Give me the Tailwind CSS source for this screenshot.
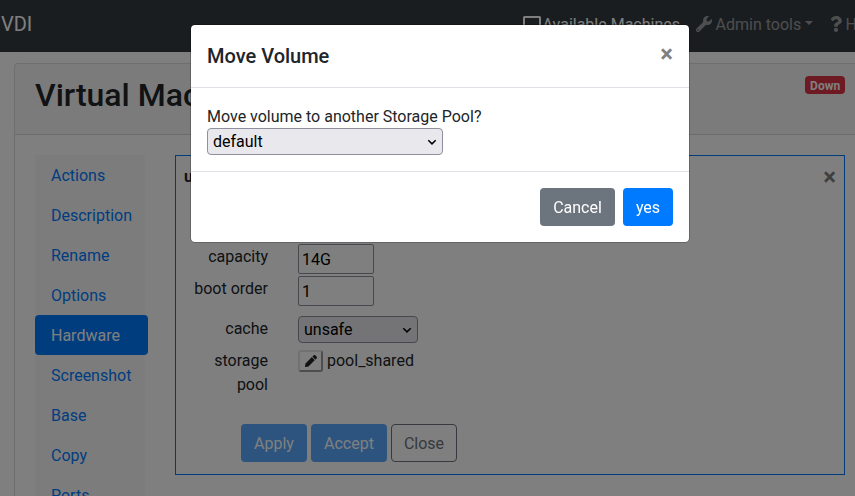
<!DOCTYPE html>
<html lang="en">
<head>
<meta charset="utf-8">
<title>Move Volume</title>
<script src="https://cdn.jsdelivr.net/npm/@tailwindcss/browser@4"></script>
</head>
<body class="h-[496px] overflow-hidden bg-white font-[Roboto,sans-serif] text-base leading-6 text-[#212529]">
<div class="h-[496px] overflow-hidden">
  <nav class="flex h-[52px] items-center justify-between bg-[#343a40] pb-1">
    <span class="pl-px text-xl text-white">VDI</span>
    <div class="flex w-[332px] shrink-0 items-center pt-[2px] whitespace-nowrap text-white/50">
      <a class="flex w-[172.5px] shrink-0 items-center text-white">
        <svg class="mr-[2px] h-[18px] w-[18px]" viewBox="0 0 18 18" fill="none" stroke="currentColor" stroke-width="2"><rect x="1" y="1" width="16" height="12" rx="0.5"/><path d="M5 16h8M9 13v3"/></svg><span class="-ml-[0.5px]">Available Machines</span></a>
      <a class="flex w-[134px] shrink-0 items-center">
        <svg class="mr-1 mb-[2px] h-4 w-4" viewBox="0 0 512 512" fill="currentColor"><path d="M507.73 109.1c-2.24-9.03-13.54-12.09-20.12-5.51l-74.36 74.36-67.88-11.31-11.31-67.88 74.36-74.36c6.62-6.62 3.43-17.9-5.66-20.16-47.38-11.74-99.55.91-136.58 37.93-39.64 39.64-50.55 97.1-34.05 147.2L18.74 402.76c-24.99 24.99-24.99 65.51 0 90.5 24.99 24.99 65.51 24.99 90.5 0l213.21-213.21c50.12 16.71 107.47 5.68 147.37-34.22 37.07-37.07 49.7-89.32 37.91-136.73zM64 472c-13.25 0-24-10.75-24-24 0-13.26 10.75-24 24-24s24 10.74 24 24c0 13.25-10.75 24-24 24z"/></svg>Admin tools<span class="mb-1 ml-1 border-x-[4.8px] border-t-[4.8px] border-x-transparent border-t-current"></span></a>
      <a class="flex shrink-0 items-center">
        <svg class="mr-1 mb-[2px] h-4 w-3" viewBox="0 0 384 512" fill="currentColor"><path d="M202.021 0C122.202 0 70.503 32.703 29.914 91.026c-7.363 10.58-5.093 25.086 5.178 32.874l43.138 32.709c10.373 7.865 25.132 6.026 33.253-4.148 25.049-31.381 43.63-49.449 82.757-49.449 30.764 0 68.816 19.799 68.816 49.631 0 22.552-18.617 34.134-48.993 51.164-35.423 19.86-82.299 44.576-82.299 106.405V320c0 13.255 10.745 24 24 24h72.471c13.255 0 24-10.745 24-24v-5.773c0-42.86 125.268-44.645 125.268-160.627C377.504 66.256 286.902 0 202.021 0zM192 373.459c-38.196 0-69.271 31.075-69.271 69.271 0 38.195 31.075 69.27 69.271 69.27s69.271-31.075 69.271-69.271-31.075-69.27-69.271-69.27z"/></svg>H</a>
    </div>
  </nav>
  <main class="mt-[11px] ml-[14px] h-[500px] rounded-tl border-t border-l border-black/[.125]">
    <header class="flex h-[71px] items-start justify-between border-b border-black/[.125] bg-black/[.03] pt-3 pr-[10px] pl-5">
      <h2 class="text-[32px] leading-[38px] font-medium">Virtual Machine</h2>
      <span class="h-[18px] rounded bg-[#dc3545] px-[4.8px] text-xs leading-[20px] font-bold text-white">Down</span>
    </header>
    <div class="flex gap-[27px] pt-5 pr-[10px] pl-5">
      <div class="w-[113px] shrink-0">
        <nav class="h-[400px] w-[110px] bg-[#f8f9fa] text-[#007bff]">
          <a class="block px-4 pt-[9px] pb-[7px]">Actions</a>
          <a class="block px-4 pt-[9px] pb-[7px]">Description</a>
          <a class="block px-4 pt-[9px] pb-[7px]">Rename</a>
          <a class="block px-4 pt-[9px] pb-[7px]">Options</a>
          <a class="block w-[113px] rounded bg-[#007bff] px-4 pt-[9px] pb-[7px] text-white">Hardware</a>
          <a class="block px-4 pt-[9px] pb-[7px]">Screenshot</a>
          <a class="block px-4 pt-[9px] pb-[7px]">Base</a>
          <a class="block px-4 pt-[9px] pb-[7px]">Copy</a>
          <a class="block px-4 pt-[9px] pb-[7px]">Ports</a>
        </nav>
      </div>
      <section class="h-[320px] w-[670px] shrink-0 border border-[#007bff]">
        <div class="flex h-[86px] justify-between pt-2 pr-2 pl-2"><b class="pt-px">usb</b><span class="mt-px text-2xl leading-6 font-bold text-black/50">×</span></div>
        <div class="grid grid-cols-[92px_1fr] gap-x-[30px]">
          <label class="h-8 pt-[3px] text-right">capacity</label>
          <input class="mt-[2px] h-[30px] w-[76px] rounded-[2px] border border-[#8f8f9d] bg-white px-[3px] text-black" value="14G">
          <label class="h-10 pt-[3px] text-right">boot order</label>
          <input class="mt-[2px] h-[30px] w-[76px] rounded-[2px] border border-[#8f8f9d] bg-white px-[3px] text-black" value="1">
          <label class="h-8 pt-[3px] text-right">cache</label>
          <div class="mt-[2px] flex h-[27px] w-[120px] items-center justify-between rounded border border-[#8f8f9d] bg-[#e9e9ed] pr-[5px] pl-[5px] text-black">unsafe<svg class="h-[10px] w-[10px]" viewBox="0 0 10 10" fill="none" stroke="currentColor" stroke-width="1.5"><path d="M1.3 3.2L5 6.9l3.7-3.7"/></svg></div>
          <label class="pt-[3px] pl-5 text-right">storage pool</label>
          <div class="flex h-8 items-start"><button class="mt-1 flex h-[22px] w-[25px] items-center justify-center rounded-[3px] border-2 border-[#e3e3e3] border-r-[#9a9a9a] border-b-[#9a9a9a] bg-white text-[#212529]"><svg class="h-3 w-3" viewBox="0 0 512 512" fill="currentColor"><path d="M497.9 142.1l-46.1 46.1c-4.7 4.7-12.3 4.7-17 0l-111-111c-4.7-4.7-4.7-12.3 0-17l46.1-46.1c18.7-18.7 49.1-18.7 67.9 0l60.1 60.1c18.8 18.7 18.8 49.1 0 67.9zM284.2 99.8L21.6 362.4.4 483.9c-2.9 16.4 11.4 30.6 27.8 27.8l121.5-21.3 262.6-262.6c4.7-4.7 4.7-12.3 0-17l-111-111c-4.8-4.7-12.4-4.7-17.1 0z"/></svg></button><span class="ml-1 pt-[3px]">pool_shared</span></div>
        </div>
        <div class="flex gap-1 pt-[27px] pl-[65px]">
          <button class="h-[38px] w-[66px] rounded bg-[#007bff] pt-[2px] text-white opacity-65">Apply</button>
          <button class="h-[38px] w-[76px] rounded bg-[#007bff] pt-[2px] text-white opacity-65">Accept</button>
          <button class="h-[38px] w-[66px] rounded border border-[#6c757d] pt-[2px] text-[#6c757d]">Close</button>
        </div>
      </section>
    </div>
  </main>
</div>
<div class="fixed inset-0 bg-black/50">
  <div role="dialog" class="mt-[25px] ml-[191px] h-[217px] w-[498px] rounded-[4px] bg-white outline outline-black/20">
    <div class="flex h-[63px] items-start justify-between border-b border-[#dee2e6] px-4 pt-4">
      <h5 class="text-xl leading-[30px] font-medium">Move Volume</h5>
      <span class="pt-px text-2xl leading-6 font-bold text-black/50">×</span>
    </div>
    <div class="h-[84px] border-b border-[#dee2e6] px-4 pt-[17px]">
      <p>Move volume to another Storage Pool?</p>
      <div class="-mt-px flex h-[27px] w-[236px] items-center justify-between rounded border border-[#8f8f9d] bg-[#e9e9ed] px-[5px] text-black">default<svg class="h-[10px] w-[10px]" viewBox="0 0 10 10" fill="none" stroke="currentColor" stroke-width="1.5"><path d="M1.3 3.2L5 6.9l3.7-3.7"/></svg></div>
    </div>
    <div class="flex justify-end gap-2 p-4">
      <button class="h-[38px] w-[75px] rounded bg-[#6c757d] pt-[2px] text-white">Cancel</button>
      <button class="h-[38px] w-[50px] rounded bg-[#007bff] pt-[2px] text-white">yes</button>
    </div>
  </div>
</div>
</body>
</html>
